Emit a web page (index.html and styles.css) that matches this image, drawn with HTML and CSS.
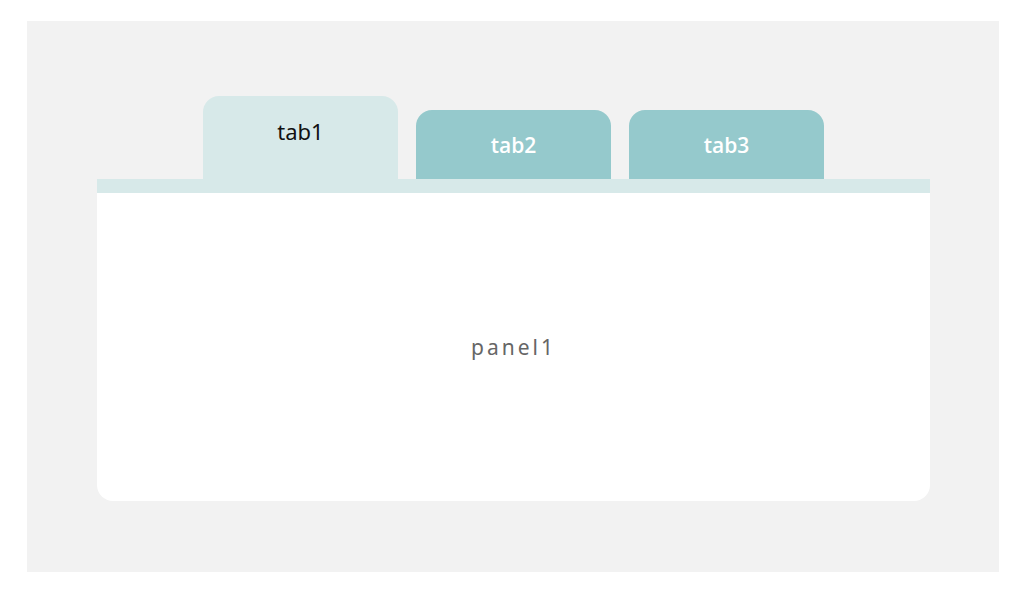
FILE: index.html
```html
<!DOCTYPE html>
<html lang="en">
<head>
<meta charset="utf-8">
<title>Tabs</title>
<link rel="stylesheet" href="styles.css">
</head>
<body>
<div class="stage">
  <div class="tabs">
    <div class="tab tab-active">tab1</div>
    <div class="tab">tab2</div>
    <div class="tab">tab3</div>
  </div>
  <div class="panel">panel1</div>
</div>
</body>
</html>
```
FILE: styles.css
```css
html, body {
  margin: 0;
  padding: 0;
  background: #ffffff;
}
body {
  padding: 21px 25px 18px 27px;
  font-family: "Noto Sans", "Noto Sans CJK JP", sans-serif;
}
.stage {
  background: #f2f2f2;
  height: 551px;
  box-sizing: border-box;
  padding: 75px 69px 0 70px;
}
.tabs {
  display: flex;
  justify-content: center;
  align-items: flex-end;
  gap: 18px;
  height: 83px;
}
.tab {
  width: 195px;
  height: 69px;
  border-radius: 16px 16px 0 0;
  background: #95c9cc;
  color: #ffffff;
  font-family: "Open Sans", "Noto Sans", sans-serif;
  font-size: 21px;
  font-weight: 600;
  display: flex;
  align-items: center;
  justify-content: center;
}
.tab-active {
  height: 83px;
  padding-bottom: 14px;
  box-sizing: border-box;
  background: #d7e9e9;
  color: #111111;
  font-family: "Noto Sans", "Noto Sans CJK JP", sans-serif;
  font-weight: 400;
  font-size: 22px;
}
.panel {
  border-top: 14px solid #d7e9e9;
  height: 308px;
  background: #ffffff;
  border-radius: 0 0 16px 16px;
  display: flex;
  align-items: center;
  justify-content: center;
  color: #666666;
  font-size: 21px;
  font-weight: 400;
  letter-spacing: 3px;
}
```
